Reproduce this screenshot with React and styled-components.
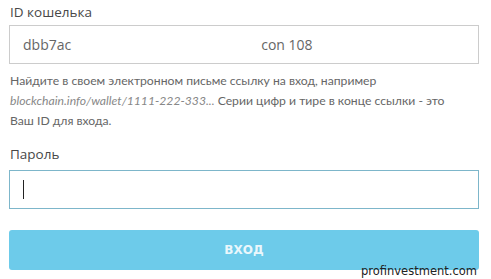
import React from "react";
import styled, { createGlobalStyle } from "styled-components";

const Global = createGlobalStyle`
  html, body {
    margin: 0;
    padding: 0;
    background: #fff;
  }
`;

const Page = styled.div`
  position: relative;
  width: 491px;
  height: 279px;
  padding: 3px 12px 0 9px;
  box-sizing: border-box;
  font-family: "Lato", "Open Sans", sans-serif;
`;

const Label = styled.div`
  font-family: "Open Sans", "Liberation Sans", sans-serif;
  font-size: 13.5px;
  color: #484848;
  line-height: 18px;
  padding-left: 1px;
  margin-bottom: ${(p) => p.$gap}px;
`;

const Field = styled.div`
  height: 39px;
  border: 1px solid ${(p) => (p.$focus ? "#7db6ca" : "#cccccc")};
  box-sizing: border-box;
  display: flex;
  align-items: center;
  padding-left: 13px;
  font-family: "Open Sans", "Liberation Sans", sans-serif;
  font-size: 14px;
  color: #666;
`;

const Gap = styled.span`
  display: inline-block;
  width: ${(p) => p.$w}px;
`;

const Caret = styled.span`
  width: 1px;
  height: 19px;
  background: #222;
`;

const Help = styled.p`
  margin: 7px 0 14px 1px;
  max-width: 452px;
  font-size: 12.2px;
  line-height: 20px;
  color: #666;

  em {
    color: #888;
  }
`;

const Button = styled.button`
  display: block;
  width: 100%;
  height: 40px;
  margin-top: 21px;
  border: none;
  border-radius: 3px;
  background: #6dcbea;
  color: #eaf7fc;
  font-family: "DejaVu Sans", "Verdana", sans-serif;
  font-size: 12px;
  font-weight: bold;
`;

const Watermark = styled.div`
  position: absolute;
  right: 14px;
  top: 264px;
  font-family: "DejaVu Sans", "Verdana", sans-serif;
  font-size: 11.5px;
  color: #222;
`;

export default function App() {
  return (
    <Page>
      <Global />
      <Label $gap={4}>ID кошелька</Label>
      <Field>
        dbb7ac
        <Gap $w={190} />
        con 108
      </Field>
      <Help>
        Найдите в своем электронном письме ссылку на вход, например{" "}
        <em>blockchain.info/wallet/1111-222-333...</em> Серии цифр и тире в конце ссылки - это Ваш ID для входа.
      </Help>
      <Label $gap={7}>Пароль</Label>
      <Field $focus>
        <Caret />
      </Field>
      <Button>ВХОД</Button>
      <Watermark>profinvestment.com</Watermark>
    </Page>
  );
}
